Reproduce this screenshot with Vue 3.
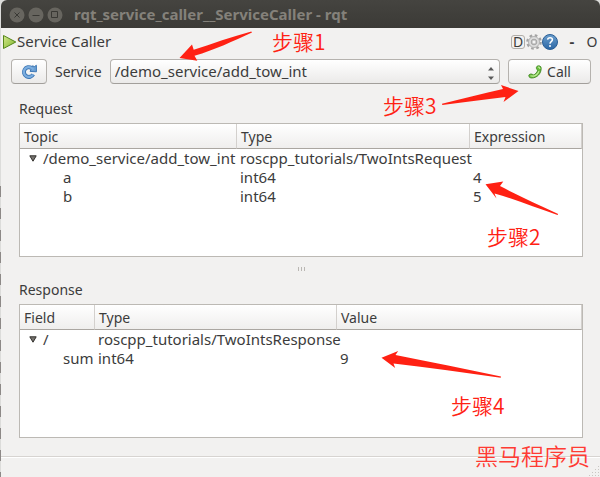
<script setup>
import { ref } from 'vue'

const service = ref('/demo_service/add_tow_int')

const groups = ref([
  {
    title: 'Request',
    kind: 'request',
    columns: ['Topic', 'Type', 'Expression'],
    root: ['/demo_service/add_tow_int', 'roscpp_tutorials/TwoIntsRequest', ''],
    rows: [
      ['a', 'int64', '4'],
      ['b', 'int64', '5'],
    ],
    open: true,
  },
  {
    title: 'Response',
    kind: 'response',
    columns: ['Field', 'Type', 'Value'],
    root: ['/', 'roscpp_tutorials/TwoIntsResponse', ''],
    rows: [['sum', 'int64', '9']],
    open: true,
  },
])
</script>

<template>
  <div class="desktop">
    <main class="window">
      <header class="titlebar">
        <button class="wm" aria-label="Close">
          <svg viewBox="0 0 16 16"><circle cx="8" cy="8" r="7.5" /><path d="M5.500 5.500l5 5M10.500 5.500l-5 5" /></svg>
        </button>
        <button class="wm" aria-label="Minimize">
          <svg viewBox="0 0 16 16"><circle cx="8" cy="8" r="7.5" /><path d="M4.500 8.500h7" /></svg>
        </button>
        <button class="wm" aria-label="Maximize">
          <svg viewBox="0 0 16 16"><circle cx="8" cy="8" r="7.5" /><path d="M4.500 4.500h6v6h-6z" /></svg>
        </button>
        <h1>rqt_service_caller__ServiceCaller - rqt</h1>
      </header>

      <div class="dock">
        <svg class="play" viewBox="0 0 15 16">
          <defs>
            <linearGradient id="playFill" x1="0" y1="0" x2="1" y2="1">
              <stop offset="0" stop-color="#d5e88c" />
              <stop offset="1" stop-color="#7fb52c" />
            </linearGradient>
          </defs>
          <path d="M1.500 1.500L13.800 8L1.500 14.500z" fill="url(#playFill)" stroke="#55861b" />
        </svg>
        <h2>Service Caller</h2>
        <div class="dock-tools">
          <button class="tool letter">D</button>
          <button class="tool" aria-label="Settings">
            <svg viewBox="0 0 16 16">
              <circle cx="8" cy="8" r="6.500" fill="none" stroke="#a3a3a3" stroke-width="2.600" stroke-dasharray="2.550 2.550" />
              <circle cx="8" cy="8" r="5.500" fill="#dcdcdc" stroke="#b4b4b4" />
              <circle cx="8" cy="8" r="2.800" fill="#c9c9c9" stroke="#a5a5a5" />
              <circle cx="8" cy="8" r="1.300" fill="#f4f4f4" />
            </svg>
          </button>
          <button class="tool" aria-label="Help">
            <svg viewBox="0 0 16 16">
              <defs>
                <linearGradient id="helpFill" x1="0" y1="0" x2="0" y2="1">
                  <stop offset="0" stop-color="#6c9fce" />
                  <stop offset="1" stop-color="#2a66a4" />
                </linearGradient>
              </defs>
              <circle cx="8" cy="8" r="7.500" fill="url(#helpFill)" stroke="#2b5f96" />
              <path d="M5.600 5.700C5.900 3.100 10.400 3.100 10.400 5.800C10.400 7.600 8 7.700 8 9.700" fill="none" stroke="#fff" stroke-width="1.500" />
              <circle cx="8" cy="12" r="1" fill="#fff" />
            </svg>
          </button>
          <button class="tool dash" aria-label="Minimize panel">-</button>
          <button class="tool float" aria-label="Float panel">O</button>
        </div>
      </div>

      <div class="toolbar">
        <button class="push refresh" aria-label="Refresh">
          <svg viewBox="0 0 16 16">
            <path d="M12.200 10.400A4.900 4.900 0 1 1 10.600 4" fill="none" stroke="#3f78b5" stroke-width="4" />
            <path d="M9.100 7.400L15.400 7.800V1.300L13.400 2.600L11.500 1.800z" fill="#6b9fd3" stroke="#3f78b5" />
            <path d="M12 10.500A4.900 4.900 0 1 1 10.800 4.200L12.500 5.500" fill="none" stroke="#7caee0" stroke-width="2.200" />
          </svg>
        </button>
        <label for="service">Service</label>
        <div class="combo">
          <select id="service" v-model="service">
            <option>/demo_service/add_tow_int</option>
          </select>
          <svg class="spin" viewBox="0 0 6 13"><path d="M0 3.500L3 0l3 3.500zM0 9.500L3 13l3-3.500z" /></svg>
        </div>
        <button class="push call">
          <svg viewBox="0 0 14 14">
            <path d="M9 1.300C11 .2 13.200 1 13.200 3.200C13.200 8.400 9.300 13 3.500 13C1 13 .1 10.700 1.300 9.600C2.400 8.600 4.500 9 5.200 10C7.300 9.500 9.100 7.500 9.700 5.300C8.300 4.500 7.900 2.300 9 1.300z" fill="#67bd3b" stroke="#397e1a" stroke-width=".8" />
            <path d="M9.800 2.300C11.100 1.600 12 2.600 11.800 4M2.500 10.800C6.500 12 9.500 9.500 10.900 6.300" fill="none" stroke="#c1ec9a" stroke-width="1.200" />
          </svg>
          Call
        </button>
      </div>

      <div class="panels">
        <template v-for="(g, i) in groups" :key="g.kind">
          <div v-if="i" class="splitter"><i></i><i></i><i></i></div>
          <section class="group">
            <h3>{{ g.title }}</h3>
            <div class="tree">
              <table :class="g.kind">
                <thead>
                  <tr><th v-for="c in g.columns" :key="c">{{ c }}</th></tr>
                </thead>
                <tbody>
                  <tr>
                    <td>
                      <button class="toggle" :class="{ closed: !g.open }" :aria-label="'Toggle ' + g.title" @click="g.open = !g.open">
                        <svg viewBox="0 0 8 7"><path d="M.8 .8h6.400L4 6.200z" /></svg>
                      </button>{{ g.root[0] }}
                    </td>
                    <td>{{ g.root[1] }}</td>
                    <td>{{ g.root[2] }}</td>
                  </tr>
                  <template v-if="g.open">
                    <tr v-for="row in g.rows" :key="row[0]" class="leaf">
                      <td v-for="(cell, n) in row" :key="n">{{ cell }}</td>
                    </tr>
                  </template>
                </tbody>
              </table>
            </div>
          </section>
        </template>
      </div>

      <footer class="status">
        <svg viewBox="0 0 12 12">
          <path d="M10 1h1v1h-1zM7 4h1v1h-1zM10 4h1v1h-1zM4 7h1v1h-1zM7 7h1v1h-1zM10 7h1v1h-1zM1 10h1v1h-1zM4 10h1v1h-1zM7 10h1v1h-1zM10 10h1v1h-1z" />
        </svg>
      </footer>
    </main>

    <svg class="arrows" width="600" height="477" viewBox="0 0 600 477">
      <path d="M179.500 58L192 44.500L193.700 49.700C212 44 232 36.500 251.300 31.500L252 32.500C233 41 215 50 194.500 55.700L197.300 60.800z" />
      <path d="M518.500 91L501 85L503 89C483 93.500 462 99 442 103.800L442.300 105C463 102.500 484 99.500 505.500 97L503.500 102z" />
      <path d="M485.500 184.300L503.300 181.500L500 186C519 196 538 204.500 558.200 214L557.500 215C536 208 516 199.500 494.500 193.500L496.500 198.500z" />
      <path d="M381.500 357.700L398.200 351L395.500 355C430 362 466 369 501 376.500L500.700 377.700C465 373 429 367.500 393.500 363.500L395.200 368z" />
    </svg>
    <span class="note step1">步骤1</span>
    <span class="note step2">步骤2</span>
    <span class="note step3">步骤3</span>
    <span class="note step4">步骤4</span>
    <span class="note mark">黑马程序员</span>
  </div>
</template>

<style>
body {
  margin: 0;
}
</style>

<style scoped>
* {
  box-sizing: border-box;
}

.desktop {
  position: relative;
  display: flex;
  min-height: 100vh;
  padding-left: 1px;
  overflow: hidden;
  background: linear-gradient(#dcdcda 0 186px, transparent 186px),
    repeating-linear-gradient(#dcdcda 0 10px, #8d8987 10px 21px, #dcdcda 21px 22px);
  color: #3c3c3c;
  font: 14px/19px "Noto Sans", "Open Sans", sans-serif;
}

.window {
  display: flex;
  flex: 1;
  flex-direction: column;
  min-width: 0;
  background: #f2f1f0;
  border-radius: 6px 6px 0 0;
}

h1,
h2,
h3 {
  margin: 0;
  font-size: 15px;
  font-weight: 400;
}

button {
  padding: 0;
  border: 0;
  background: none;
  color: inherit;
  font: inherit;
}

svg {
  display: block;
}

.titlebar {
  display: flex;
  align-items: center;
  gap: 3px;
  height: 28px;
  padding: 1px 8px 0;
  background: linear-gradient(#454440, #3b3a36);
  border-radius: 6px 6px 0 0;
}

.titlebar h1 {
  margin-left: 8px;
  color: #84817a;
  font-weight: 700;
}

.wm svg {
  width: 16px;
  height: 16px;
  fill: #67655f;
}

.wm path {
  fill: none;
  stroke: #393834;
}

.dock {
  display: flex;
  align-items: center;
  height: 27px;
  padding: 0 2px 0 1px;
}

.play {
  width: 15px;
  height: 16px;
}

.dock-tools {
  display: flex;
  align-items: center;
  margin-left: auto;
}

.tool svg {
  width: 16px;
  height: 16px;
}

.letter {
  width: 14px;
  height: 14px;
  margin-right: 1px;
  border: 1px solid #b1aea9;
  border-radius: 3px;
  line-height: 12px;
}

.dash {
  width: 28px;
  font-size: 15px;
  font-weight: 700;
}

.float {
  width: 12px;
}

.toolbar {
  display: flex;
  align-items: center;
  gap: 8px;
  padding: 4px 9px 0 10px;
}

.push,
.combo select {
  height: 25px;
  border: 1px solid #b5b2ae;
  border-bottom-color: #a29f9b;
  border-radius: 4px;
  background: linear-gradient(#ffffff, #ebeae9);
}

.push {
  display: flex;
  align-items: center;
  justify-content: center;
  gap: 5px;
}

.refresh {
  width: 36px;
}

.refresh svg {
  width: 16px;
  height: 16px;
}

.call {
  width: 83px;
}

.call svg {
  width: 14px;
  height: 14px;
}

.combo {
  position: relative;
  flex: 1;
}

.combo select {
  display: block;
  width: 100%;
  padding: 0 20px 0 4px;
  appearance: none;
  color: inherit;
  font: inherit;
  font-size: 15px;
}

.spin {
  position: absolute;
  top: 8px;
  right: 6px;
  width: 6px;
  height: 13px;
  fill: #5a5a5a;
  pointer-events: none;
}

.panels {
  display: flex;
  flex: 1;
  flex-direction: column;
  padding: 15px 17px 18px 18px;
}

.group {
  display: flex;
  flex: 1;
  flex-direction: column;
}

.group h3 {
  padding-bottom: 5px;
  font-size: 14px;
}

.tree {
  flex: 1;
  border: 1px solid #bcb9b4;
  background: #ffffff;
}

.splitter {
  display: flex;
  align-items: center;
  justify-content: center;
  gap: 2px;
  height: 23px;
}

.splitter i {
  width: 1px;
  height: 4px;
  background: #bab7b3;
}

table {
  width: 100%;
  border-collapse: separate;
  border-spacing: 0;
  table-layout: fixed;
}

th {
  height: 25px;
  padding: 1px 4px 0;
  border-right: 1px solid #d3d0cd;
  border-bottom: 1px solid #aaa6a1;
  background: linear-gradient(#ffffff, #efeeed);
  font-weight: 400;
  text-align: left;
}

td {
  height: 19px;
  padding: 0 3px;
  font-size: 15px;
  line-height: 19px;
  white-space: nowrap;
}

.request th:nth-child(1) {
  width: 217px;
}

.request th:nth-child(2) {
  width: 233px;
}

.response th:nth-child(1) {
  width: 75px;
}

.response th:nth-child(2) {
  width: 242px;
}

.leaf td:first-child {
  padding: 0 0 0 43px;
}

.toggle {
  width: 20px;
  padding-left: 6px;
}

.toggle svg {
  width: 8px;
  height: 7px;
  margin-bottom: 2px;
  fill: #77746f;
  stroke: #33312e;
}

.toggle.closed svg {
  transform: rotate(-90deg);
}

.status {
  display: flex;
  align-items: flex-end;
  justify-content: flex-end;
  height: 21px;
  border-top: 1px solid #d7d4d1;
  box-shadow: inset 0 1px #ffffff;
}

.status svg {
  width: 12px;
  height: 12px;
  fill: #c9c6c2;
}

.arrows {
  position: absolute;
  top: 0;
  left: 0;
  fill: #ff2113;
  pointer-events: none;
}

.note {
  position: absolute;
  color: #ff2113;
  font: 350 21px/24px "Noto Sans CJK SC", sans-serif;
  white-space: nowrap;
}

.step1 {
  top: 29px;
  left: 272px;
}

.step2 {
  top: 224px;
  left: 487px;
}

.step3 {
  top: 93px;
  left: 383px;
}

.step4 {
  top: 393px;
  left: 451px;
}

.mark {
  top: 443px;
  left: 475px;
  color: #ff3b33;
  font-size: 23px;
}
</style>
